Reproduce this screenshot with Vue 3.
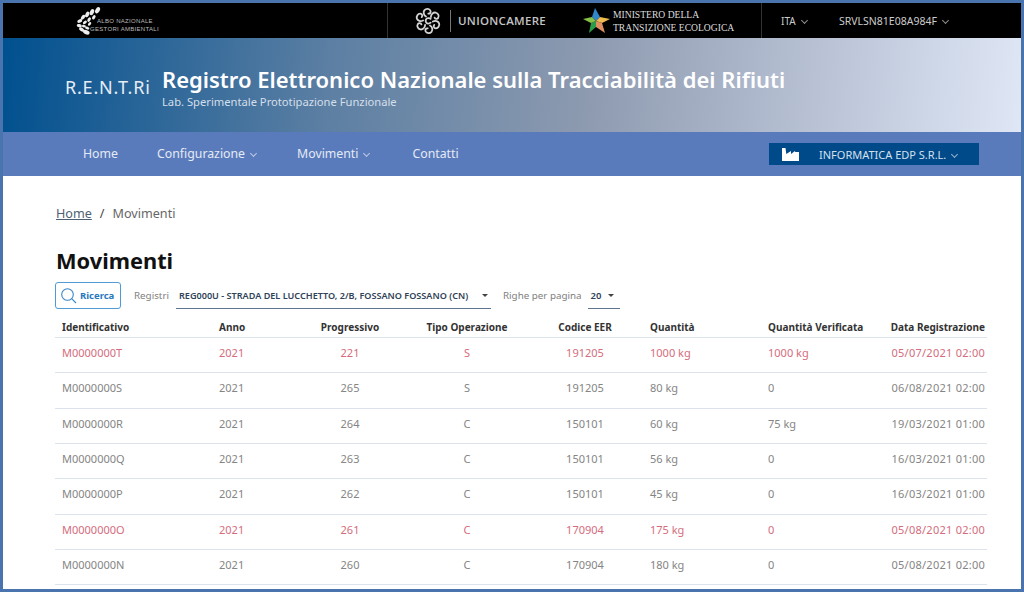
<template>
  <div class="frame">
    <header class="topbar">
      <div class="top-left">
        <svg class="albo-icon" width="30" height="30" viewBox="0 0 32 30">
          <g fill="#eee">
            <ellipse v-for="(l, i) in leaves" :key="i" :cx="l[0]" :cy="l[1]" :rx="l[2]" :ry="l[2] * 0.62" :transform="`rotate(${l[3]} ${l[0]} ${l[1]})`" />
          </g>
        </svg>
        <div class="albo-text"><span>ALBO NAZIONALE</span><span>GESTORI AMBIENTALI</span></div>
      </div>
      <div class="top-mid">
        <div class="union">
          <svg width="28" height="28" viewBox="0 0 28 28" fill="none" stroke="#d4d4d4" stroke-width="1.8" stroke-linecap="round">
            <path v-for="a in lobes" :key="a" d="M12 9.5C9.5 8 9 5 10.5 3.2 12.2 1.3 15.4 1.6 16.4 3.6 17.2 5.3 16 7 14.3 6.6" :transform="`rotate(${a} 14 14)`" />
            <path d="M16.6 11.8c-1.5-1.3-4-.9-4.7.9-.8 2 .6 3.9 2.5 3.9.9 0 1.6-.3 2.2-.9" />
          </svg>
          <span class="union-sep"></span>
          <span class="union-text">UNIONCAMERE</span>
        </div>
        <div class="mite">
          <svg width="27" height="26" viewBox="0 0 27 26">
            <polygon points="12,0 17,9 13,13 9,9" fill="#2f86c9" />
            <polygon points="17,9 27,11 19,15 13,13" fill="#efba4f" />
            <polygon points="13,13 19,15 22,25 13,19" fill="#e08f62" />
            <polygon points="13,13 13,19 6,25 8,15" fill="#2b9c4a" />
            <polygon points="13,13 8,15 0,11 9,9" fill="#86c24a" />
          </svg>
          <div class="mite-text"><span>MINISTERO DELLA</span><span>TRANSIZIONE ECOLOGICA</span></div>
        </div>
      </div>
      <div class="top-right">
        <span class="lang">ITA<i class="chev"></i></span>
        <span class="user">SRVLSN81E08A984F<i class="chev"></i></span>
      </div>
    </header>

    <div class="banner">
      <div class="brand">R.E.N.T.Ri</div>
      <div>
        <div class="title">Registro Elettronico Nazionale sulla Tracciabilità dei Rifiuti</div>
        <div class="subtitle">Lab. Sperimentale Prototipazione Funzionale</div>
      </div>
    </div>

    <nav class="nav">
      <a class="home">Home</a>
      <a class="conf">Configurazione<i class="chev"></i></a>
      <a class="mov">Movimenti<i class="chev"></i></a>
      <a>Contatti</a>
      <button class="company">
        <svg width="17" height="13" viewBox="0 0 17 13" fill="#fff">
          <path d="M0 0h3.5l.8 6L9 3v3l4-3 .2 1H17v9H0z" />
        </svg>
        <span>INFORMATICA EDP S.R.L.<i class="chev"></i></span>
      </button>
    </nav>

    <main class="content">
      <div class="crumbs"><a>Home</a><b>/</b><span>Movimenti</span></div>
      <h1>Movimenti</h1>
      <div class="filters">
        <button class="search">
          <svg width="17" height="17" viewBox="0 0 17 17" fill="none" stroke="#3b87c8" stroke-width="1.1">
            <circle cx="7.5" cy="7.5" r="5.8" />
            <path d="M11.7 11.7l4.3 4.3" />
          </svg>
          Ricerca
        </button>
        <label class="lbl reg-lbl">Registri</label>
        <div class="select reg"><span>REG000U - STRADA DEL LUCCHETTO, 2/B, FOSSANO FOSSANO (CN)</span><i class="caret"></i></div>
        <label class="lbl per-lbl">Righe per pagina</label>
        <div class="select per"><span>20</span><i class="caret"></i></div>
      </div>

      <div class="grid head">
        <div v-for="(h, i) in headers" :key="i" class="cell">{{ h }}</div>
      </div>
      <div v-for="r in rows" :key="r[0]" class="grid row" :class="{ red: r[8] }">
        <div v-for="i in 8" :key="i" class="cell">{{ r[i - 1] }}</div>
      </div>
    </main>
  </div>
</template>

<script setup>
const leaves = [
  [23, 3.5, 3.6, -60], [17, 5.5, 3.4, -65], [12, 8, 3.2, -65], [7.5, 11, 3, -50],
  [4, 15, 2.8, -25], [3.5, 20, 2.8, 10], [6, 24, 3, 30], [11, 27, 3.6, 20],
  [19, 11, 2.6, -60], [14, 13.5, 2.6, -60], [9.5, 16.5, 2.4, -35], [8.5, 20.5, 2.2, 5],
  [12, 22.5, 2.4, 20], [14.5, 18, 2.2, -50]
]

const lobes = [0, 60, 120, 180, 240, 300]

const headers = ['Identificativo', 'Anno', 'Progressivo', 'Tipo Operazione', 'Codice EER', 'Quantità', 'Quantità Verificata', 'Data Registrazione']

const rows = [
  ['M0000000T', '2021', '221', 'S', '191205', '1000 kg', '1000 kg', '05/07/2021 02:00', true],
  ['M0000000S', '2021', '265', 'S', '191205', '80 kg', '0', '06/08/2021 02:00', false],
  ['M0000000R', '2021', '264', 'C', '150101', '60 kg', '75 kg', '19/03/2021 01:00', false],
  ['M0000000Q', '2021', '263', 'C', '150101', '56 kg', '0', '16/03/2021 01:00', false],
  ['M0000000P', '2021', '262', 'C', '150101', '45 kg', '0', '16/03/2021 01:00', false],
  ['M0000000O', '2021', '261', 'C', '170904', '175 kg', '0', '05/08/2021 02:00', true],
  ['M0000000N', '2021', '260', 'C', '170904', '180 kg', '0', '05/08/2021 02:00', false]
]
</script>

<style scoped>
.frame {
  box-sizing: border-box;
  height: 592px;
  overflow: hidden;
  background: #fff;
  border: 3px solid #4a74ad;
  font-family: "Noto Sans", "Open Sans", sans-serif;
}
.topbar {
  display: flex;
  height: 35px;
  background: #000;
}
.top-left {
  display: flex;
  align-items: center;
  width: 385px;
  padding-left: 73px;
  box-sizing: border-box;
  border-right: 1px solid #333;
}
.albo-text {
  display: flex;
  flex-direction: column;
  margin: 9px 0 0 -16px;
  font-family: "Liberation Sans", sans-serif;
  font-size: 6px;
  line-height: 8px;
  letter-spacing: 0.3px;
  color: #bbb;
  white-space: nowrap;
}
.albo-text span:first-child {
  margin-left: 7px;
}
.top-mid {
  display: flex;
  align-items: center;
  width: 374px;
  box-sizing: border-box;
  padding-left: 26px;
  border-right: 1px solid #333;
}
.union {
  display: flex;
  align-items: center;
  width: 169px;
}
.union-sep {
  width: 1px;
  height: 22px;
  margin: 0 7px 0 8px;
  background: #777;
}
.union-text {
  font-family: "Open Sans", sans-serif;
  font-size: 11.5px;
  font-weight: 600;
  letter-spacing: 0.3px;
  color: #c4c4c4;
}
.mite {
  display: flex;
  align-items: center;
  gap: 3px;
}
.mite-text {
  display: flex;
  flex-direction: column;
  font-family: "Liberation Serif", serif;
  font-size: 9.6px;
  line-height: 13px;
  color: #ddd;
  white-space: nowrap;
}
.top-right {
  display: flex;
  align-items: center;
  padding-left: 19px;
  font-size: 10px;
  color: #ccc;
  white-space: nowrap;
}
.lang {
  width: 58px;
}
.user {
  font-size: 10.5px;
}
.chev {
  display: inline-block;
  width: 4px;
  height: 4px;
  margin: 0 0 2px 6px;
  border-right: 1px solid currentColor;
  border-bottom: 1px solid currentColor;
  transform: rotate(45deg);
  opacity: 0.7;
}
.banner {
  display: flex;
  align-items: center;
  height: 94px;
  box-sizing: border-box;
  padding: 3px 0 0 62px;
  background: linear-gradient(95deg, #00508f 0%, #5c7fa3 32%, #8e9bb0 58%, #aab4c8 72%, #dfe7f6 100%);
}
.brand {
  width: 97px;
  margin-top: 1px;
  font-size: 18px;
  letter-spacing: 0.8px;
  color: #e6edf5;
  white-space: nowrap;
}
.title {
  font-size: 22px;
  line-height: 29px;
  font-weight: 600;
  color: #fff;
  white-space: nowrap;
}
.subtitle {
  margin-top: 1px;
  font-size: 11.2px;
  line-height: 14px;
  color: #d5dfea;
}
.nav {
  display: flex;
  align-items: center;
  height: 44px;
  padding: 0 0 2px 80px;
  box-sizing: border-box;
  background: #5a7bbb;
  font-size: 12.3px;
  color: #e4eaf5;
}
.nav a {
  white-space: nowrap;
}
.home {
  margin-right: 39px;
}
.conf {
  margin-right: 41px;
}
.mov {
  margin-right: 43px;
}
.company {
  display: flex;
  align-items: center;
  box-sizing: border-box;
  width: 210px;
  height: 22px;
  margin: 2px 42px 0 auto;
  padding: 0 0 0 13px;
  border: 0;
  background: #004a8a;
  font: inherit;
  font-size: 11px;
  color: #d5e0ee;
}
.company span {
  margin-left: 20px;
  white-space: nowrap;
}
.content {
  padding: 0 34px 0 52px;
}
.crumbs {
  display: flex;
  align-items: center;
  height: 20px;
  margin: 27px 0 0 1px;
  font-size: 12.6px;
  color: #666;
}
.crumbs a {
  color: #4c5f75;
  text-decoration: underline;
}
.crumbs b {
  margin: 0 8px;
  font-weight: 400;
  color: #444;
}
h1 {
  margin: 24px 0 0 1px;
  font-size: 21.8px;
  line-height: 28px;
  font-weight: 700;
  color: #111;
}
.filters {
  display: flex;
  align-items: center;
  height: 27px;
  margin-top: 7px;
}
.search {
  display: flex;
  align-items: center;
  gap: 3px;
  box-sizing: border-box;
  width: 66px;
  height: 27px;
  padding: 0 0 0 4px;
  border: 1px solid #4f9bd8;
  border-radius: 3px;
  background: #fff;
  font: inherit;
  font-size: 9.5px;
  font-weight: 700;
  color: #2a78bd;
}
.lbl {
  font-size: 9.8px;
  color: #808080;
  white-space: nowrap;
}
.reg-lbl {
  margin-left: 13px;
}
.select {
  display: flex;
  align-items: center;
  justify-content: space-between;
  box-sizing: border-box;
  height: 26px;
  padding-left: 3px;
  border-bottom: 1px solid #5d7492;
  font-size: 9.1px;
  font-weight: 600;
  color: #2f4258;
  white-space: nowrap;
}
.reg {
  width: 315px;
  margin-left: 7px;
  padding-right: 3px;
}
.per-lbl {
  margin-left: 12px;
}
.per {
  width: 32px;
  margin-left: 6px;
  padding-right: 6px;
  font-size: 9.5px;
}
.caret {
  width: 0;
  height: 0;
  border-left: 3px solid transparent;
  border-right: 3px solid transparent;
  border-top: 3px solid #444;
}
.grid {
  display: grid;
  grid-template-columns: 157px 81px 114px 120px 116px 118px 99px 127px;
  width: 932px;
  align-items: center;
  border-bottom: 1px solid #dde3ec;
  box-sizing: border-box;
  font-size: 11px;
  color: #858585;
  white-space: nowrap;
}
.head {
  height: 29px;
  padding-top: 7px;
  font-size: 10px;
  font-weight: 700;
  color: #333;
}
.row {
  height: 35.33px;
  padding-bottom: 5px;
}
.red {
  color: #d46c7d;
}
.cell {
  padding-left: 7px;
}
.cell:nth-child(3),
.cell:nth-child(4),
.cell:nth-child(5) {
  padding-left: 0;
  text-align: center;
}
.cell:nth-child(8) {
  padding: 0 2px 0 0;
  text-align: right;
}
.row .cell:nth-child(8) {
  letter-spacing: 0.25px;
}
</style>

<style>
body {
  overflow: hidden;
}
</style>
